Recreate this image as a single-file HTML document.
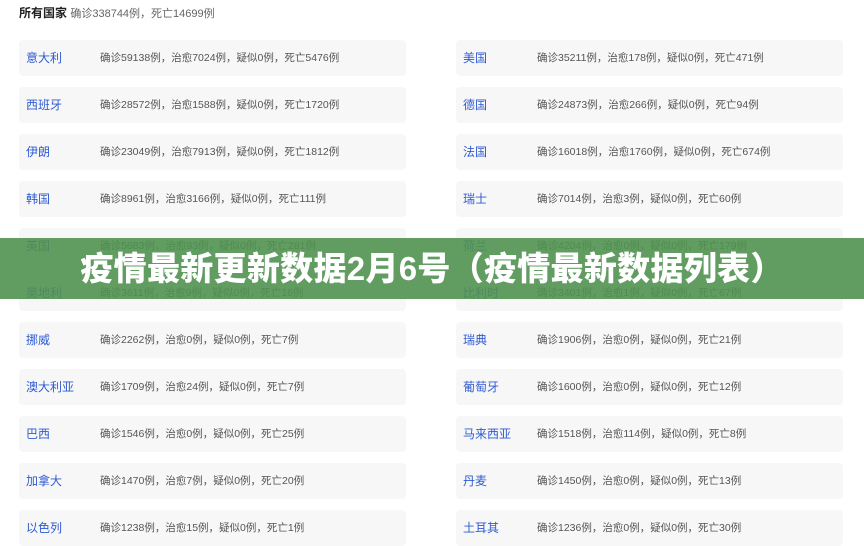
<!DOCTYPE html><html><head><meta charset="utf-8"><style>
body{margin:0;width:864px;height:539px;overflow:hidden;background:#fff;font-family:"Liberation Sans","Noto Sans CJK SC",sans-serif;position:relative}
.h{position:absolute;left:19px;top:4px;font-size:12px;color:#222;font-weight:bold}
.h span{font-weight:normal;color:#666;font-size:11px}
.c{position:absolute;width:387px;height:36px;background:#f7f7f7;border-radius:4px}
.c b{position:absolute;left:7px;top:9px;font-weight:normal;font-size:12px;color:#2f5bd3}
.c i{position:absolute;left:81px;top:10px;font-style:normal;font-size:10.5px;color:#555}
.bn{position:absolute;left:0;top:238px;width:864px;height:61px;background:rgba(80,145,80,.9);color:#fff;font-weight:900;font-size:33px;text-align:center;line-height:61px;letter-spacing:0.3px}
</style></head><body>
<div class="h">所有国家 <span>确诊338744例，死亡14699例</span></div>
<div id="g"></div>
<script>
var L=[["意大利","确诊59138例，治愈7024例，疑似0例，死亡5476例"],["西班牙","确诊28572例，治愈1588例，疑似0例，死亡1720例"],["伊朗","确诊23049例，治愈7913例，疑似0例，死亡1812例"],["韩国","确诊8961例，治愈3166例，疑似0例，死亡111例"],["英国","确诊5683例，治愈93例，疑似0例，死亡281例"],["奥地利","确诊3611例，治愈9例，疑似0例，死亡16例"],["挪威","确诊2262例，治愈0例，疑似0例，死亡7例"],["澳大利亚","确诊1709例，治愈24例，疑似0例，死亡7例"],["巴西","确诊1546例，治愈0例，疑似0例，死亡25例"],["加拿大","确诊1470例，治愈7例，疑似0例，死亡20例"],["以色列","确诊1238例，治愈15例，疑似0例，死亡1例"]];
var R=[["美国","确诊35211例，治愈178例，疑似0例，死亡471例"],["德国","确诊24873例，治愈266例，疑似0例，死亡94例"],["法国","确诊16018例，治愈1760例，疑似0例，死亡674例"],["瑞士","确诊7014例，治愈3例，疑似0例，死亡60例"],["荷兰","确诊4204例，治愈0例，疑似0例，死亡179例"],["比利时","确诊3401例，治愈1例，疑似0例，死亡67例"],["瑞典","确诊1906例，治愈0例，疑似0例，死亡21例"],["葡萄牙","确诊1600例，治愈0例，疑似0例，死亡12例"],["马来西亚","确诊1518例，治愈114例，疑似0例，死亡8例"],["丹麦","确诊1450例，治愈0例，疑似0例，死亡13例"],["土耳其","确诊1236例，治愈0例，疑似0例，死亡30例"]];
var h="";for(var k=0;k<11;k++){var t=40+47*k;h+='<div class="c" style="left:19px;top:'+t+'px"><b>'+L[k][0]+'</b><i>'+L[k][1]+'</i></div>';h+='<div class="c" style="left:456px;top:'+t+'px"><b>'+R[k][0]+'</b><i>'+R[k][1]+'</i></div>';}
document.getElementById("g").innerHTML=h;
</script>
<div class="bn">疫情最新更新数据2月6号（疫情最新数据列表）</div>
</body></html>
